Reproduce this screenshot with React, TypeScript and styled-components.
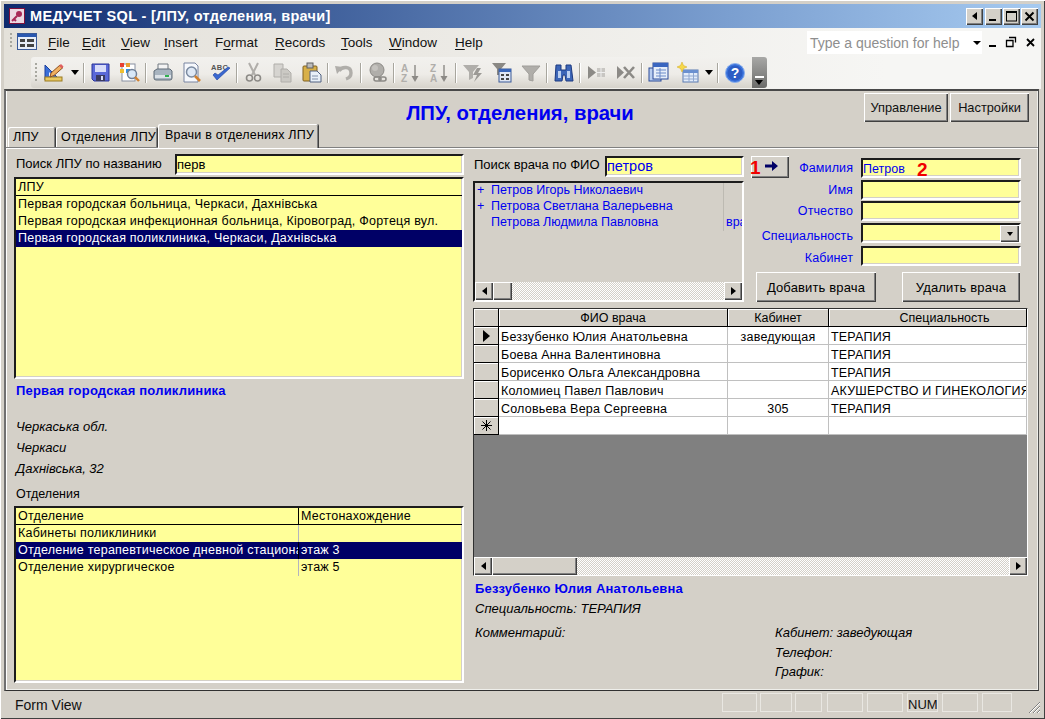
import React from "react";
import styled, { createGlobalStyle, css } from "styled-components";

const Global = createGlobalStyle`
  html, body { margin: 0; padding: 0; height: 100%; background: #d4d0c8; overflow: hidden; }
  body { font-family: "Liberation Sans", Arial, sans-serif; font-size: 12px; color: #000; }
  * { box-sizing: border-box; }
`;

const raised = css`
  background: #d4d0c8;
  box-shadow: inset 1px 1px 0 #fff, inset -1px -1px 0 #404040, inset -2px -2px 0 #808080;
`;
const sunken = css`
  border-style: solid;
  border-width: 2px;
  border-color: #1c1c1c #fff #fff #1c1c1c;
  box-shadow: inset -1px -1px 0 #d4d0c8;
`;

const Win = styled.div`
  width: 1045px; height: 719px; padding: 4px 4px 3px 4px; background: #d4d0c8;
  display: flex; flex-direction: column; overflow: hidden;
  box-shadow: inset 1px 1px 0 #fff, inset -1px -1px 0 #404040;
`;
const TitleBar = styled.div`
  height: 24px; flex: none; display: flex; align-items: center; padding: 0 3px 0 5px;
  background: linear-gradient(90deg, #0f2a6e 0%, #3c5c98 28%, #7b9fd0 70%, #a6caf0 100%);
`;
const TitleIcon = styled.svg` width: 16px; height: 16px; flex: none; `;
const TitleText = styled.div`
  margin-left: 5px; flex: 1; color: #fff; font: bold 14.5px "Liberation Sans", sans-serif; letter-spacing: .32px; white-space: nowrap;
`;
const WinButton = styled.div<{ $gap: number }>`
  width: 17px; height: 17px; margin-left: ${p => p.$gap}px; flex: none; ${raised};
  display: flex; align-items: center; justify-content: center;
`;

const MenuBar = styled.div`
  height: 29px; flex: none; display: flex; align-items: center; position: relative;
  padding-left: 44px; background: linear-gradient(90deg, #e4e1da 0%, #ebe9e4 40%, #f6f6f4 85%);
  font-size: 13.5px; color: #111;
`;
const MenuGrip = styled.div`
  position: absolute; left: 6px; top: 5px; width: 2px; height: 16px;
  background: repeating-linear-gradient(180deg, #a8a8a0 0 2px, transparent 2px 4px);
`;
const DocIcon = styled.svg` position: absolute; left: 13px; top: 5px; width: 20px; height: 17px; `;
const MenuItem = styled.span<{ $w: number }>`
  width: ${p => p.$w}px; flex: none; white-space: nowrap;
  u { text-decoration-thickness: 1px; text-underline-offset: 2px; }
`;
const HelpBox = styled.div`
  position: absolute; left: 803px; top: 3px; width: 175px; height: 23px; background: #fff;
  padding: 4px 0 0 3px; color: #8e8e8e; font-size: 14px; white-space: nowrap;
`;
const MdiGlyphs = styled.svg` position: absolute; left: 960px; top: 8px; width: 76px; height: 14px; `;

const ToolRow = styled.div`
  height: 32px; flex: none; display: flex; padding-left: 27px; background: linear-gradient(90deg, #e4e1da, #ebe9e4 40%, #f6f6f4 85%);
`;
const Toolbar = styled.div`
  width: 721px; height: 31px; display: flex; align-items: center; padding-left: 8px; position: relative;
  background: linear-gradient(180deg, #f2f1ee 0%, #eeece8 55%, #d6d3cb 100%);
  border-radius: 3px 0 0 3px;
`;
const ToolGrip = styled.div`
  position: absolute; left: 4px; top: 6px; width: 2px; height: 20px;
  background: repeating-linear-gradient(180deg, #a8a8a0 0 2px, transparent 2px 4px);
`;
const Slot = styled.div`
  width: 29px; height: 24px; flex: none; display: flex; align-items: center; justify-content: center;
  svg { width: 22px; height: 22px; display: block; }
`;
const Drop = styled.div`
  width: 14px; flex: none; display: flex; justify-content: center;
  &::after { content: ""; border: 4.5px solid transparent; border-top: 5px solid #000; border-bottom: 0; }
`;
const Sep = styled.div`
  width: 4px; height: 20px; flex: none; position: relative;
  &::after { content: ""; position: absolute; left: 1px; top: 0; width: 1px; height: 100%; background: #a8a69e; box-shadow: 1px 0 0 #fff; }
`;
const Overflow = styled.div`
  width: 15px; height: 31px; flex: none; position: relative; border-radius: 0 3px 3px 0;
  background: linear-gradient(180deg, #a8a8a6, #6c6c6a);
  &::before { content: ""; position: absolute; left: 3px; top: 19px; width: 9px; height: 2px; background: #fff; }
  &::after { content: ""; position: absolute; left: 3px; top: 23px; border: 4.5px solid transparent; border-top: 5px solid #000; border-bottom: 0; }
`;

const FormArea = styled.div`
  flex: 1; min-height: 0; display: flex; flex-direction: column;
  margin: 0 2px 0 0; background: #d4d0c8;
  border-style: solid; border-width: 2px 1px 1px 2px; border-color: #484848 #505050 #303030 #707070;
  box-shadow: inset 1px 0 0 #fff, inset -1px -1px 0 #efefeb;
`;
const Header = styled.div`
  height: 33px; flex: none; display: grid; grid-template-columns: 858px 1fr; padding: 2px 7px 0 0; position: relative;
`;
const FormTitle = styled.h1`
  margin: 0; position: absolute; left: 0; right: 0; top: 11px; padding-right: 4px; text-align: center;
  color: #0000f0; font: bold 20.3px "Liberation Sans", sans-serif;
`;
const HeadButtons = styled.div` grid-column: 2; display: flex; gap: 2px; position: relative; `;
const HeadButton = styled.div<{ $w: number }>`
  ${raised}; width: ${p => p.$w}px; height: 29px; display: flex; align-items: center; justify-content: center; font-size: 12.8px; color: #111;
`;
const TabStrip = styled.div`
  height: 23px; flex: none; display: flex; align-items: flex-end; padding-left: 2px; gap: 1px; position: relative; z-index: 1;
`;
const Tab = styled.div<{ $w: number; $active?: boolean }>`
  width: ${p => p.$w}px; height: ${p => (p.$active ? 24 : 20)}px; margin-bottom: ${p => (p.$active ? -1 : 0)}px;
  background: #d4d0c8; border-radius: 2px 2px 0 0; font-size: 12.5px; padding: ${p => (p.$active ? "4px 0 0 7px" : "3px 0 0 5px")};
  white-space: nowrap; letter-spacing: .2px;
  box-shadow: inset 1px 1px 0 #fff, inset -1px 0 0 #808080, 1px 0 0 #404040;
`;
const TabPage = styled.div`
  flex: 1; min-height: 0; display: flex; gap: 9px; padding: 6px 6px 0 8px;
  border-top: 1px solid #808080; box-shadow: inset 0 1px 0 #fff;
`;
const LeftCol = styled.div` width: 450px; flex: none; display: flex; flex-direction: column; `;
const RightCol = styled.div` width: 555px; flex: none; display: flex; flex-direction: column; `;

const SearchRow = styled.div` display: flex; align-items: center; `;
const SearchLabel = styled.div<{ $w: number; $left: number; $up: number }>`
  width: ${p => p.$w}px; flex: none; padding: 0 0 ${p => p.$up}px ${p => p.$left}px; font-size: 13px; white-space: nowrap;
`;
const Field = styled.div<{ $w?: number; $h?: number; $fs?: number; $blue?: boolean; $lh?: number }>`
  ${sunken}; background: #ffff99; ${p => (p.$w ? `width:${p.$w}px;` : "flex:1;")} height: ${p => p.$h ?? 20}px; flex-shrink: 0;
  font-size: ${p => p.$fs ?? 12.5}px; color: ${p => (p.$blue ? "#0000f0" : "#000")};
  padding-left: 0; line-height: ${p => p.$lh ?? (p.$h ?? 20) - 4}px; position: relative; white-space: nowrap;
`;
const YellowList = styled.div<{ $h: number; $mt: number }>`
  ${sunken}; background: #ffff99; height: ${p => p.$h}px; margin-top: ${p => p.$mt}px; overflow: hidden; font-size: 12.5px; letter-spacing: .23px;
`;
const LRow = styled.div<{ $cols?: string; $head?: boolean; $sel?: boolean }>`
  height: 17px; display: grid; grid-template-columns: ${p => p.$cols ?? "1fr"}; line-height: 16px;
  ${p => p.$head && "border-bottom: 1px solid #000;"}
  ${p => p.$sel && "background: #000066; color: #fff;"}
`;
const LCell = styled.div<{ $line?: boolean; $dark?: boolean }>`
  padding-left: 2px; white-space: nowrap; overflow: hidden;
  ${p => p.$line && `border-right: 1px solid ${p.$dark ? "#000" : "#b4b4c0"};`}
`;
const BlueName = styled.div<{ $mt: number }>`
  margin-top: ${p => p.$mt}px; height: 14px; line-height: 14px; padding-left: 2px; color: #0000f0; font-weight: bold; font-size: 13px; white-space: nowrap; letter-spacing: .2px;
`;
const Address = styled.div` margin-top: 18px; `;
const AddrLine = styled.div` height: 21px; line-height: 21px; padding-left: 2px; font-style: italic; font-size: 13px; `;
const SectionLabel = styled.div` margin-top: 8px; height: 14px; line-height: 14px; padding-left: 2px; font-size: 12.5px; `;

const TopRight = styled.div` display: flex; gap: 7px; height: 154px; `;
const DocSearch = styled.div` width: 271px; flex: none; padding-top: 2px; `;
const DocList = styled.div`
  ${sunken}; height: 121px; margin-top: 4px; display: flex; flex-direction: column; position: relative;
`;
const DocRows = styled.div` flex: 1; min-height: 0; overflow: hidden; color: #0000f0; font-size: 12.5px; `;
const DocRow = styled.div`
  height: 16px; line-height: 15px; display: grid; grid-template-columns: 14px 234px 1fr; white-space: nowrap; overflow: hidden;
`;
const DocCell = styled.div<{ $line?: boolean }>`
  padding-left: 2px; overflow: hidden; ${p => p.$line && "border-left: 1px solid #bdbab2;"}
`;
const Scroll = styled.div` height: 18px; flex: none; display: flex; background: conic-gradient(#fff 25%, #d4d0c8 0 50%, #fff 0 75%, #d4d0c8 0) 0 0 / 2px 2px; `;
const ScrollBtn = styled.div`
  ${raised}; width: 18px; height: 18px; flex: none; display: flex; align-items: center; justify-content: center;
`;
const Thumb = styled.div<{ $w: number }>` ${raised}; width: ${p => p.$w}px; height: 18px; flex: none; `;
const ScrollGap = styled.div` flex: 1; `;
const ArrowL = styled.i` border: 4px solid transparent; border-left: 0; border-right: 5px solid #000; `;
const ArrowR = styled.i` border: 4px solid transparent; border-right: 0; border-left: 5px solid #000; `;

const Editor = styled.div` flex: 1; display: flex; flex-direction: column; padding-top: 2px; `;
const EditRow = styled.div<{ $mt: number }>`
  display: flex; align-items: flex-end; margin-top: ${p => p.$mt}px; padding-right: 7px; position: relative;
`;
const GoButton = styled.div`
  ${raised}; width: 38px; height: 22px; flex: none; position: relative; display: flex; align-items: center; justify-content: center; padding-left: 1px;
  svg { width: 14px; height: 10px; margin-top: -3px; margin-left: 3px; }
`;
const EditLabel = styled.div<{ $up?: number }>`
  flex: 1; text-align: right; padding: 0 8px ${p => p.$up ?? 3}px 0; color: #0000f0; font-size: 12.5px; white-space: nowrap; letter-spacing: .1px;
`;
const Callout = styled.span<{ $size: number; $left: number; $top: number }>`
  position: absolute; left: ${p => p.$left}px; top: ${p => p.$top}px; color: #f00000; font-weight: bold; font-size: ${p => p.$size}px; line-height: 1;
`;
const Combo = styled.div`
  position: absolute; right: 0; top: 0; width: 19px; height: 17px; ${raised};
  display: flex; align-items: center; justify-content: center;
  &::after { content: ""; border: 3.5px solid transparent; border-top: 4px solid #000; border-bottom: 0; }
`;
const Actions = styled.div` display: flex; padding-left: 5px; gap: 26px; margin-top: 6px; `;
const ActionButton = styled.div<{ $w: number }>`
  ${raised}; width: ${p => p.$w}px; height: 30px; display: flex; align-items: center; justify-content: center; font-size: 13px; letter-spacing: .15px;
`;

const Sheet = styled.div`
  margin-top: 0; height: 268px; display: flex; flex-direction: column; background: #808080;
  border-style: solid; border-width: 1px; border-color: #303030 #fff #fff #303030;
`;
const SheetRow = styled.div` display: grid; grid-template-columns: 25px 229px 101px 1fr; height: 18px; flex: none; `;
const SheetHead = styled.div<{ $shift?: number }>`
  background: #d4d0c8; border-right: 1px solid #000; border-bottom: 1px solid #000;
  box-shadow: inset 1px 1px 0 #fff; text-align: center; line-height: 16px; font-size: 12.5px; white-space: nowrap; overflow: hidden;
  display: flex; align-items: center; justify-content: center; padding-left: ${p => p.$shift ?? 0}px;
`;
const SheetCell = styled.div<{ $center?: boolean }>`
  background: #fff; border-right: 1px solid #c0c0c0; border-bottom: 1px solid #c0c0c0; padding-left: 2px; line-height: 21px;
  font-size: 12.5px; letter-spacing: .2px; white-space: nowrap; overflow: hidden; ${p => p.$center && "text-align: center; padding-left: 0;"}
`;
const SheetFill = styled.div` flex: 1; background: #808080; `;
const Details = styled.div` padding: 6px 0 0 0; `;
const DetailLine = styled.div<{ $mt?: number }>`
  margin-top: ${p => p.$mt ?? 0}px; height: 14px; line-height: 14px; padding-left: 2px; font-style: italic; font-size: 13px; white-space: nowrap;
`;
const DetailCols = styled.div` display: grid; grid-template-columns: 300px 1fr; margin-top: 10px; `;
const DetailStack = styled.div` display: flex; flex-direction: column; gap: 5.5px; `;

const StatusBar = styled.div`
  height: 25px; flex: none; display: flex; align-items: stretch; padding: 2px 0 4px 10px; position: relative; font-size: 14px; color: #111;
`;
const StatusText = styled.div` flex: 1; padding: 4px 0 0 1px; `;
const Panel = styled.div<{ $w: number; $gap?: number; $bare?: boolean }>`
  width: ${p => p.$w}px; margin-left: ${p => p.$gap ?? 4}px; flex: none; padding: 4px 0 0 1px; font-size: 13px;
  ${p => !p.$bare && "box-shadow: inset 1px 1px 0 #e9e7e2, inset -1px -1px 0 #e9e7e2;"}
`;
const SizeGrip = styled.svg` position: absolute; right: 0; bottom: 2px; width: 14px; height: 14px; `;

/* ---- toolbar drawings ---- */
const G = "#b0aeaa", GD = "#8c8a86";
const icons: Record<string, React.ReactNode> = {
  design: <><path d="M2 3v15h15z" fill="#3a6fd8" stroke="#1c3f9c" /><path d="M6 10v4.5h4.5z" fill="#eef" /><rect x="2" y="15" width="17" height="4" fill="#e8c860" stroke="#9a7a20" /><path d="M8 11l9-8 3 2.5-9 8-4 1.5z" fill="#f0b060" stroke="#8a5020" /><path d="M16 4l3 2.5 1.5-2L18 2z" fill="#e06060" /></>,
  save: <><path d="M2 2h17v17H4l-2-2z" fill="#5a68d8" stroke="#2a3498" /><rect x="5" y="3" width="11" height="7" fill="#d8dcf8" /><rect x="6" y="13" width="9" height="6" fill="#3a3a60" /><rect x="11" y="14" width="2" height="4" fill="#d8dcf8" /></>,
  web: <><rect x="3" y="2" width="13" height="17" fill="#fff" stroke="#8890a0" /><rect x="1" y="1" width="4" height="4" fill="#e84030" /><rect x="7" y="1" width="4" height="4" fill="#e8a030" /><rect x="1" y="7" width="4" height="4" fill="#f0c030" /><rect x="7" y="7" width="4" height="4" fill="#3090e0" /><circle cx="13" cy="12" r="4.5" fill="#d8e8f8" stroke="#708098" strokeWidth="1.5" /><path d="M16 15l4 4" stroke="#d08030" strokeWidth="2.4" /></>,
  print: <><path d="M6 2h10v6H6z" fill="#f4f4f4" stroke="#707880" /><path d="M2 9l3-2h13l2 2v7a2 2 0 01-2 2H4a2 2 0 01-2-2z" fill="#a8b4c0" stroke="#606c78" /><rect x="3" y="13" width="16" height="3" fill="#dce2e8" /><rect x="13" y="13" width="4" height="2" fill="#30b050" /></>,
  preview: <><path d="M3 1h11l3 3v16H3z" fill="#f6f8fc" stroke="#7884a0" /><circle cx="10.5" cy="10" r="5" fill="#dfe9f6" stroke="#7a8aa0" strokeWidth="1.5" /><path d="M14 14l5 5" stroke="#d08030" strokeWidth="2.6" /></>,
  spell: <><text x="1" y="8" fontFamily="Liberation Sans" fontWeight="bold" fontSize="7.5" fill="#555" letterSpacing=".3">ABC</text><path d="M3 13l4 5 13-12-2-1-10 8-3-2z" fill="#3a68d0" stroke="#1c3f9c" strokeWidth=".6" /></>,
  cut: <><path d="M6 1l6 12M15 1l-6 12" stroke={G} strokeWidth="2" /><circle cx="6.5" cy="16" r="3" fill="none" stroke={GD} strokeWidth="1.6" /><circle cx="14.5" cy="16" r="3" fill="none" stroke={GD} strokeWidth="1.6" /></>,
  copy: <><path d="M2 2h9v13H2z" fill="#d6d4d0" stroke={G} /><path d="M9 7h6l4 4v9H9z" fill="#cbc9c4" stroke={G} /><path d="M11 12h6M11 15h6" stroke={G} /></>,
  paste: <><rect x="2" y="4" width="14" height="15" rx="1" fill="#d8b048" stroke="#806020" /><rect x="6" y="1" width="6" height="5" fill="#bcbcbc" stroke="#606060" /><path d="M9 9h7l4 4v7H9z" fill="#e8f0f8" stroke="#506080" /><path d="M11 14h6M11 17h6" stroke="#8090a8" /></>,
  undo: <><path d="M5 9c3-5 12-5 12 2 0 3-2 5-5 6" fill="none" stroke={G} strokeWidth="3.4" /><path d="M1 4l8 1-6 7z" fill={G} /></>,
  links: <><circle cx="10" cy="8" r="7" fill={G} stroke={GD} /><circle cx="8" cy="6" r="3" fill="#c4c2be" /><rect x="7" y="15" width="7" height="4" rx="2" fill="none" stroke={GD} strokeWidth="1.6" /><rect x="12" y="15" width="7" height="4" rx="2" fill="none" stroke={GD} strokeWidth="1.6" /></>,
  az: <><text x="1" y="10" fontFamily="Liberation Sans" fontWeight="bold" fontSize="10" fill={G}>A</text><text x="1" y="20" fontFamily="Liberation Sans" fontWeight="bold" fontSize="10" fill={G}>Z</text><path d="M15 3v13" stroke={GD} strokeWidth="1.4" /><path d="M11.5 14h7L15 20z" fill={GD} /></>,
  za: <><text x="1" y="10" fontFamily="Liberation Sans" fontWeight="bold" fontSize="10" fill={G}>Z</text><text x="1" y="20" fontFamily="Liberation Sans" fontWeight="bold" fontSize="10" fill={G}>A</text><path d="M15 3v13" stroke={GD} strokeWidth="1.4" /><path d="M11.5 14h7L15 20z" fill={GD} /></>,
  fsel: <><path d="M1 3h16l-6 7v6l-4 2v-8z" fill={G} /><path d="M15 6l-4 7h4l-3 7 8-9h-4l3-5z" fill="#9c9a96" /></>,
  fform: <><path d="M1 1h14l-5 6v6H6V7z" fill="#8a8884" /><rect x="8" y="7" width="12" height="13" fill="#dfe6f2" stroke="#3a5a98" /><rect x="8" y="7" width="12" height="3" fill="#3a66b8" /><rect x="10" y="12" width="3" height="2" fill="#444" /><rect x="15" y="12" width="3" height="2" fill="#444" /><rect x="10" y="16" width="3" height="2" fill="#444" /><rect x="15" y="16" width="3" height="2" fill="#444" /></>,
  fapply: <path d="M2 4h18l-7 8v7l-4-1v-6z" fill={G} stroke="#a09e9a" />,
  find: <><path d="M3 3h5v5h5V3h5l2 16h-7l-1-6h-2l-1 6H2z" fill="#3d66b8" stroke="#1d3a80" /><rect x="5" y="9" width="3" height="7" fill="#bcd0f0" /><rect x="14" y="9" width="3" height="7" fill="#bcd0f0" /></>,
  newrec: <><path d="M2 4l8 6.5L2 17z" fill={GD} /><rect x="11" y="6" width="8" height="9" fill="#c8c6c2" /><path d="M11 10.5h8M15 6v9" stroke="#eee" /></>,
  delrec: <><path d="M2 4l7 6.5L2 17z" fill={GD} /><path d="M9 5l10 11M19 5L9 16" stroke={GD} strokeWidth="2.6" /></>,
  db: <><rect x="1" y="6" width="12" height="13" fill="#b8cdf0" stroke="#2a4a98" /><rect x="5" y="1" width="15" height="16" fill="#e6eefa" stroke="#2a4a98" /><rect x="5" y="1" width="15" height="4" fill="#3a66c0" /><path d="M8 8h10M8 11h10M8 14h10M12 6v10" stroke="#6a8ac8" /></>,
  newobj: <><rect x="6" y="8" width="15" height="12" fill="#e2ecfa" stroke="#5a7ab0" /><rect x="6" y="8" width="15" height="3" fill="#6a90d0" /><path d="M6 14h15M6 17h15M12 11v9M16.5 11v9" stroke="#90a8d0" /><path d="M5 0l1.5 3.5L10 5 6.5 6.5 5 10 3.500 6.500 0 5l3.500-1.500z" fill="#f6d84a" stroke="#d0a820" strokeWidth=".5" /></>,
  help: <><circle cx="11" cy="11" r="9.500" fill="#3c74dc" stroke="#8cb0ec" /><circle cx="11" cy="11" r="7.500" fill="#2c5cc4" /><text x="11" y="16" textAnchor="middle" fontFamily="Liberation Sans" fontWeight="bold" fontSize="14" fill="#fff">?</text></>,
};

const T = ({ n }: { n: string }) => (
  <Slot><svg viewBox="0 0 22 22">{icons[n]}</svg></Slot>
);

const tools = ["design", "|d", "save", "web", "|", "print", "preview", "spell", "|", "cut", "copy", "paste", "|", "undo", "|", "links", "|", "az", "za", "|", "fsel", "fform", "fapply", "|", "find", "|", "newrec", "delrec", "|", "db", "newobj", "|d"];

const menus: [string, string, string, number][] = [
  ["", "F", "ile", 34], ["", "E", "dit", 39], ["", "V", "iew", 43], ["", "I", "nsert", 51], ["F", "o", "rmat", 60],
  ["", "R", "ecords", 66], ["", "T", "ools", 48], ["", "W", "indow", 66], ["", "H", "elp", 30],
];

const people: [string, string, string][] = [
  ["Беззубенко Юлия Анатольевна", "заведующая", "ТЕРАПИЯ"],
  ["Боева Анна Валентиновна", "", "ТЕРАПИЯ"],
  ["Борисенко Ольга Александровна", "", "ТЕРАПИЯ"],
  ["Коломиец Павел Павлович", "", "АКУШЕРСТВО И ГИНЕКОЛОГИЯ"],
  ["Соловьева Вера Сергеевна", "305", "ТЕРАПИЯ"],
  ["", "", ""],
];

const DEPT = "283px 1fr";

const ScrollBar = ({ thumb }: { thumb: number }) => (
  <Scroll>
    <ScrollBtn><ArrowL /></ScrollBtn>
    <Thumb $w={thumb} />
    <ScrollGap />
    <ScrollBtn><ArrowR /></ScrollBtn>
  </Scroll>
);

export default function App() {
  return (
    <Win>
      <Global />
      <TitleBar>
        <TitleIcon viewBox="0 0 16 16">
          <rect x=".5" y=".5" width="15" height="15" fill="#ecd8e2" stroke="#80103c" />
          <circle cx="10" cy="6" r="3" fill="#a82a58" />
          <path d="M8 8l-5 5M5 11l2 2" stroke="#a82a58" strokeWidth="2" />
        </TitleIcon>
        <TitleText>МЕДУЧЕТ SQL - [ЛПУ, отделения, врачи]</TitleText>
        <WinButton $gap={0}><ArrowL /></WinButton>
        <WinButton $gap={2}><svg width="11" height="11"><rect x="1" y="8" width="7" height="2" /></svg></WinButton>
        <WinButton $gap={1}><svg width="11" height="11"><rect x=".5" y="1" width="10" height="9" fill="none" stroke="#000" /><rect x="0" y="0" width="11" height="2" /></svg></WinButton>
        <WinButton $gap={1}><svg width="11" height="11"><path d="M1.500 1.500l8 8M9.500 1.500l-8 8" stroke="#000" strokeWidth="2" /></svg></WinButton>
      </TitleBar>
      <MenuBar>
        <MenuGrip />
        <DocIcon viewBox="0 0 20 17">
          <rect x=".5" y=".5" width="19" height="16" fill="#e8eef8" stroke="#3a5a98" />
          <rect x="1" y="1" width="18" height="3" fill="#2a58b0" />
          <rect x="3" y="6" width="5" height="3" fill="#444" /><rect x="10" y="6" width="7" height="3" fill="#444" />
          <rect x="3" y="11" width="5" height="3" fill="#444" /><rect x="10" y="11" width="7" height="3" fill="#444" />
        </DocIcon>
        {menus.map(([a, u, b, w]) => (
          <MenuItem key={u + b} $w={w}>{a}<u>{u}</u>{b}</MenuItem>
        ))}
        <HelpBox>Type a question for help</HelpBox>
        <MdiGlyphs viewBox="0 0 76 14">
          <path d="M9 5h8l-4 4z" /><rect x="25" y="9" width="7" height="2" />
          <path d="M45 1.500h6.500v5M42.500 4.500h6.500v6h-6.500z" fill="none" stroke="#000" strokeWidth="1.300" />
          <path d="M63 3l7 7M70 3l-7 7" stroke="#000" strokeWidth="1.800" />
        </MdiGlyphs>
      </MenuBar>
      <ToolRow>
        <Toolbar>
          <ToolGrip />
          {tools.map((t, i) =>
            t === "|d" ? (
              <React.Fragment key={i}><Drop /><Sep /></React.Fragment>
            ) : t === "|" ? (
              <Sep key={i} />
            ) : (
              <T key={i} n={t} />
            ),
          )}
          <T n="help" />
        </Toolbar>
        <Overflow />
      </ToolRow>
      <FormArea>
        <Header>
          <FormTitle>ЛПУ, отделения, врачи</FormTitle>
          <HeadButtons>
            <HeadButton $w={84}>Управление</HeadButton>
            <HeadButton $w={79}>Настройки</HeadButton>
          </HeadButtons>
        </Header>
        <TabStrip>
          <Tab $w={47}>ЛПУ</Tab>
          <Tab $w={101}>Отделения ЛПУ</Tab>
          <Tab $w={160} $active>Врачи в отделениях ЛПУ</Tab>
        </TabStrip>
        <TabPage>
          <LeftCol>
            <SearchRow>
              <SearchLabel $w={161} $left={2} $up={2}>Поиск ЛПУ по названию</SearchLabel>
              <Field $h={21} $fs={13}>перв</Field>
            </SearchRow>
            <YellowList $h={202} $mt={2}>
              <LRow $head><LCell>ЛПУ</LCell></LRow>
              <LRow><LCell>Первая городская больница, Черкаси, Дахнівська</LCell></LRow>
              <LRow><LCell>Первая городская инфекционная больница, Кіровоград, Фортеця вул.</LCell></LRow>
              <LRow $sel><LCell>Первая городская поликлиника, Черкаси, Дахнівська</LCell></LRow>
            </YellowList>
            <BlueName $mt={5}>Первая городская поликлиника</BlueName>
            <Address>
              <AddrLine>Черкаська обл.</AddrLine>
              <AddrLine>Черкаси</AddrLine>
              <AddrLine>Дахнівська, 32</AddrLine>
            </Address>
            <SectionLabel>Отделения</SectionLabel>
            <YellowList $h={177} $mt={5}>
              <LRow $head $cols={DEPT}><LCell $line $dark>Отделение</LCell><LCell>Местонахождение</LCell></LRow>
              <LRow $cols={DEPT}><LCell $line>Кабинеты поликлиники</LCell><LCell /></LRow>
              <LRow $sel $cols={DEPT}><LCell $line $dark>Отделение терапевтическое дневной стационар</LCell><LCell>этаж 3</LCell></LRow>
              <LRow $cols={DEPT}><LCell $line>Отделение хирургическое</LCell><LCell>этаж 5</LCell></LRow>
            </YellowList>
          </LeftCol>
          <RightCol>
            <TopRight>
              <DocSearch>
                <SearchRow>
                  <SearchLabel $w={132} $left={1} $up={4}>Поиск врача по ФИО</SearchLabel>
                  <Field $w={139} $h={21} $fs={14.5} $blue>петров</Field>
                </SearchRow>
                <DocList>
                  <DocRows>
                    <DocRow><DocCell>+</DocCell><DocCell>Петров Игорь Николаевич</DocCell><DocCell $line /></DocRow>
                    <DocRow><DocCell>+</DocCell><DocCell>Петрова Светлана Валерьевна</DocCell><DocCell $line /></DocRow>
                    <DocRow><DocCell /><DocCell>Петрова Людмила Павловна</DocCell><DocCell $line>врач</DocCell></DocRow>
                  </DocRows>
                  <ScrollBar thumb={19} />
                </DocList>
              </DocSearch>
              <Editor>
                <EditRow $mt={0}>
                  <GoButton>
                    <Callout $size={19} $left={-1} $top={2}>1</Callout>
                    <svg viewBox="0 0 14 10"><path d="M0 3.500h7V0l6 5-6 5V6.500H0z" fill="#000066" /></svg>
                  </GoButton>
                  <EditLabel>Фамилия</EditLabel>
                  <Field $w={160} $blue $lh={19}>Петров<Callout $size={19} $left={54} $top={0}>2</Callout></Field>
                </EditRow>
                <EditRow $mt={2}><EditLabel>Имя</EditLabel><Field $w={160} /></EditRow>
                <EditRow $mt={1}><EditLabel>Отчество</EditLabel><Field $w={160} /></EditRow>
                <EditRow $mt={2}><EditLabel $up={0}>Специальность</EditLabel><Field $w={160}><Combo /></Field></EditRow>
                <EditRow $mt={3}><EditLabel $up={1}>Кабинет</EditLabel><Field $w={160} /></EditRow>
                <Actions>
                  <ActionButton $w={120}>Добавить врача</ActionButton>
                  <ActionButton $w={118}>Удалить врача</ActionButton>
                </Actions>
              </Editor>
            </TopRight>
            <Sheet>
              <SheetRow>
                <SheetHead />
                <SheetHead>ФИО врача</SheetHead>
                <SheetHead>Кабинет</SheetHead>
                <SheetHead $shift={34}>Специальность</SheetHead>
              </SheetRow>
              {people.map(([n, r, s], i) => (
                <SheetRow key={i}>
                  <SheetHead>
                    {i === 0 && <svg width="9" height="12"><path d="M1 0l7 6-7 6z" /></svg>}
                    {i === 5 && <svg width="13" height="13"><path d="M6.500 1v11M1 6.500h11M2.500 2.500l8 8M10.500 2.500l-8 8" stroke="#000" /></svg>}
                  </SheetHead>
                  <SheetCell>{n}</SheetCell>
                  <SheetCell $center>{r}</SheetCell>
                  <SheetCell>{s}</SheetCell>
                </SheetRow>
              ))}
              <SheetFill />
              <ScrollBar thumb={85} />
            </Sheet>
            <Details>
              <BlueName $mt={0}>Беззубенко Юлия Анатольевна</BlueName>
              <DetailLine $mt={6}>Специальность: ТЕРАПИЯ</DetailLine>
              <DetailCols>
                <DetailLine>Комментарий:</DetailLine>
                <DetailStack>
                  <DetailLine>Кабинет: заведующая</DetailLine>
                  <DetailLine>Телефон:</DetailLine>
                  <DetailLine>График:</DetailLine>
                </DetailStack>
              </DetailCols>
            </Details>
          </RightCol>
        </TabPage>
      </FormArea>
      <StatusBar>
        <StatusText>Form View</StatusText>
        <Panel $w={35} />
        <Panel $w={32} $gap={3} />
        <Panel $w={27} $gap={3} />
        <Panel $w={36} $gap={5} />
        <Panel $w={36} />
        <Panel $w={31}>NUM</Panel>
        <Panel $w={36} />
        <Panel $w={30} />
        <Panel $w={28} $gap={1} $bare />
        <SizeGrip viewBox="0 0 14 14"><path d="M13 2L2 13M13 6l-7 7M13 10l-3 3" stroke="#808080" /><path d="M13 3L3 13M13 7l-6 6M13 11l-2 2" stroke="#fff" /></SizeGrip>
      </StatusBar>
    </Win>
  );
}
